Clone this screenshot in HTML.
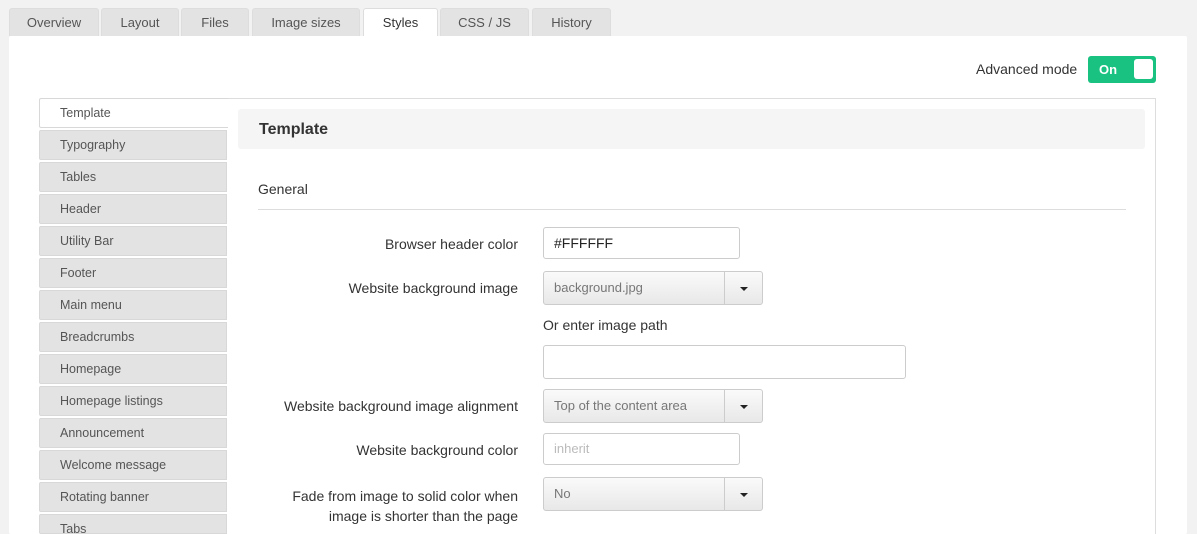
<!DOCTYPE html>
<html style="height:534px;overflow:hidden"><head><style>
body{margin:0;width:1197px;height:534px;overflow:hidden;background:#f2f2f2;font-family:"Liberation Sans",Arial,sans-serif;position:relative}
.a{position:absolute}
.tab{position:absolute;top:8px;height:28px;background:#e3e3e3;border:1px solid #ddd;border-bottom:none;border-radius:3px 3px 0 0;font-size:13px;color:#555;text-align:center;line-height:27px;box-sizing:border-box}
.panel{left:9px;top:36px;width:1178px;height:498px;background:#fff;border-radius:2px}
.side{position:absolute;left:39px;width:188px;height:30px;background:#e3e3e3;border:1px solid #d8d8d8;box-sizing:border-box;font-size:12.5px;color:#555;line-height:28px;padding-left:20px;border-radius:2px 0 0 2px}
.lbl{position:absolute;right:679px;font-size:14px;color:#333;text-align:right}
.inp{position:absolute;left:543px;height:32px;border:1px solid #ccc;border-radius:3px;box-sizing:border-box;background:#fff;font-size:14px;line-height:30px;padding-left:10px}
.sel{position:absolute;left:543px;width:220px;height:34px;border:1px solid #ccc;border-radius:3px;box-sizing:border-box;background:linear-gradient(#fafafa,#e8e8e8);font-size:13px;color:#777;line-height:32px;padding-left:10px}
.sel:after{content:"";position:absolute;right:0;top:0;width:37px;height:32px;border-left:1px solid #ccc}
.sel i{position:absolute;right:14px;top:15px;border-left:4px solid transparent;border-right:4px solid transparent;border-top:4px solid #222}
</style></head><body>
<div class="tab" style="left:9px;width:90px">Overview</div>
<div class="tab" style="left:101px;width:78px">Layout</div>
<div class="tab" style="left:181px;width:68px">Files</div>
<div class="tab" style="left:252px;width:108px">Image sizes</div>
<div class="tab" style="left:363px;width:75px;background:#fff;color:#333;height:29px">Styles</div>
<div class="tab" style="left:440px;width:89px">CSS / JS</div>
<div class="tab" style="left:532px;width:79px">History</div>
<div class="a panel"></div>
<div class="a" style="left:976px;top:61px;font-size:14px;color:#333">Advanced mode</div>
<div class="a" style="left:1088px;top:56px;width:68px;height:27px;background:#19c281;border-radius:3px"><span class="a" style="left:11px;top:6px;color:#fff;font-weight:bold;font-size:13px">On</span><span class="a" style="left:46px;top:3px;width:19px;height:20px;background:#fff;border-radius:3px"></span></div>
<div class="a" style="left:227px;top:98px;width:929px;height:436px;border:1px solid #ddd;border-left:none;border-bottom:none;box-sizing:border-box"></div>
<div class="side" style="top:98px;background:#fff;width:189px;border-right:none">Template</div>
<div class="side" style="top:130px">Typography</div>
<div class="side" style="top:162px">Tables</div>
<div class="side" style="top:194px">Header</div>
<div class="side" style="top:226px">Utility Bar</div>
<div class="side" style="top:258px">Footer</div>
<div class="side" style="top:290px">Main menu</div>
<div class="side" style="top:322px">Breadcrumbs</div>
<div class="side" style="top:354px">Homepage</div>
<div class="side" style="top:386px">Homepage listings</div>
<div class="side" style="top:418px">Announcement</div>
<div class="side" style="top:450px">Welcome message</div>
<div class="side" style="top:482px">Rotating banner</div>
<div class="side" style="top:514px;height:20px">Tabs</div>
<div class="a" style="left:238px;top:109px;width:907px;height:40px;background:#f5f5f5;border-radius:3px"><span class="a" style="left:21px;top:12px;font-size:16px;font-weight:bold;color:#333">Template</span></div>
<div class="a" style="left:258px;top:181px;font-size:14px;color:#333">General</div>
<div class="a" style="left:258px;top:209px;width:868px;height:1px;background:#ddd"></div>
<div class="lbl" style="top:236px">Browser header color</div>
<div class="inp" style="top:227px;width:197px;color:#222">#FFFFFF</div>
<div class="lbl" style="top:280px">Website background image</div>
<div class="sel" style="top:271px">background.jpg<i></i></div>
<div class="a" style="left:543px;top:317px;font-size:14px;color:#333">Or enter image path</div>
<div class="inp" style="top:345px;width:363px;height:34px"></div>
<div class="lbl" style="top:398px">Website background image alignment</div>
<div class="sel" style="top:389px">Top of the content area<i></i></div>
<div class="lbl" style="top:442px">Website background color</div>
<div class="inp" style="top:433px;width:197px;color:#bbb;font-size:13px">inherit</div>
<div class="lbl" style="top:486px;line-height:20px">Fade from image to solid color when<br>image is shorter than the page</div>
<div class="sel" style="top:477px">No<i></i></div>
</body></html>
